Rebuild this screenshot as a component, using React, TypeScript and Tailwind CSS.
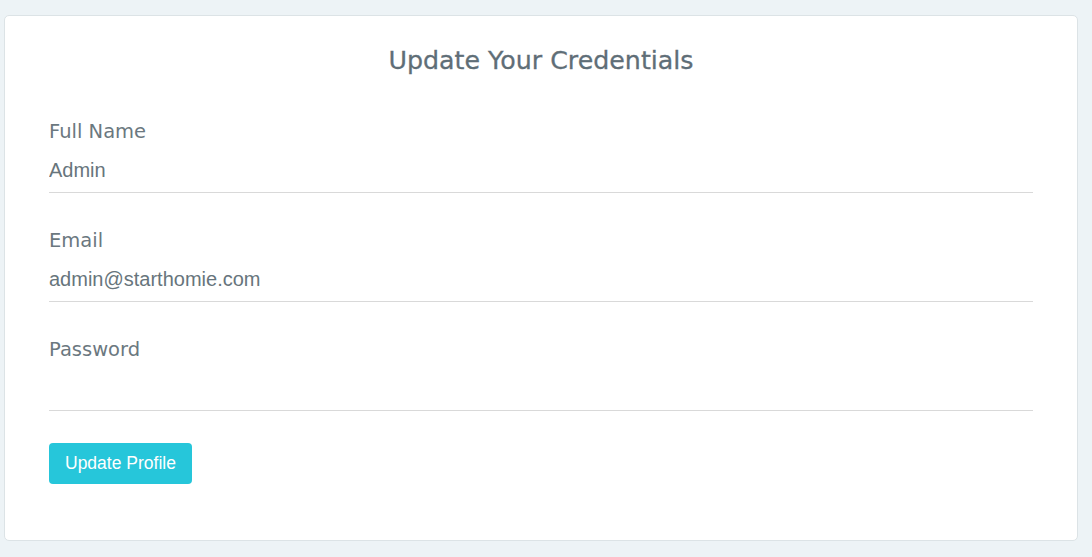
export default function App() {
  const fields = [
    { label: "Full Name", value: "Admin", type: "text" },
    { label: "Email", value: "admin@starthomie.com", type: "email" },
    { label: "Password", value: "", type: "password" },
  ];
  return (
    <div className="min-h-[557px] w-[1092px] bg-[#edf3f6] pt-[15px] pl-[4px]">
      <div className="w-[1074px] rounded-[5px] border border-[#dce3e6] bg-white px-[44px] pt-[27px] pb-[56px]">
        <h4 className="h-[36px] text-center text-[25.3px] leading-[36px] font-normal text-[#5f6e77] [-webkit-text-stroke:0.3px_#5f6e77] [font-family:'DejaVu_Sans',sans-serif]">
          Update Your Credentials
        </h4>
        <form className="mt-[39px] flex flex-col" onSubmit={(e) => e.preventDefault()}>
          {fields.map((f) => (
            <div key={f.label} className="mb-[34px] flex flex-col">
              <label className="h-[28px] text-[19.5px] leading-[28px] text-[#6b7880] [font-family:'DejaVu_Sans',sans-serif]">
                {f.label}
              </label>
              <input
                type={f.type}
                defaultValue={f.value}
                className="mt-[2px] h-[45px] w-full border-b border-[#d9d9d9] bg-transparent p-0 text-[20px] text-[#67757c] outline-none [font-family:'Liberation_Sans',Arial,sans-serif]"
              />
            </div>
          ))}
          <div className="-mt-[2px]">
            <button
              type="submit"
              className="h-[41px] rounded-[4px] bg-[#26c6da] px-[16px] text-[17.5px] text-white [font-family:'Liberation_Sans',Arial,sans-serif]"
            >
              Update Profile
            </button>
          </div>
        </form>
      </div>
    </div>
  );
}
